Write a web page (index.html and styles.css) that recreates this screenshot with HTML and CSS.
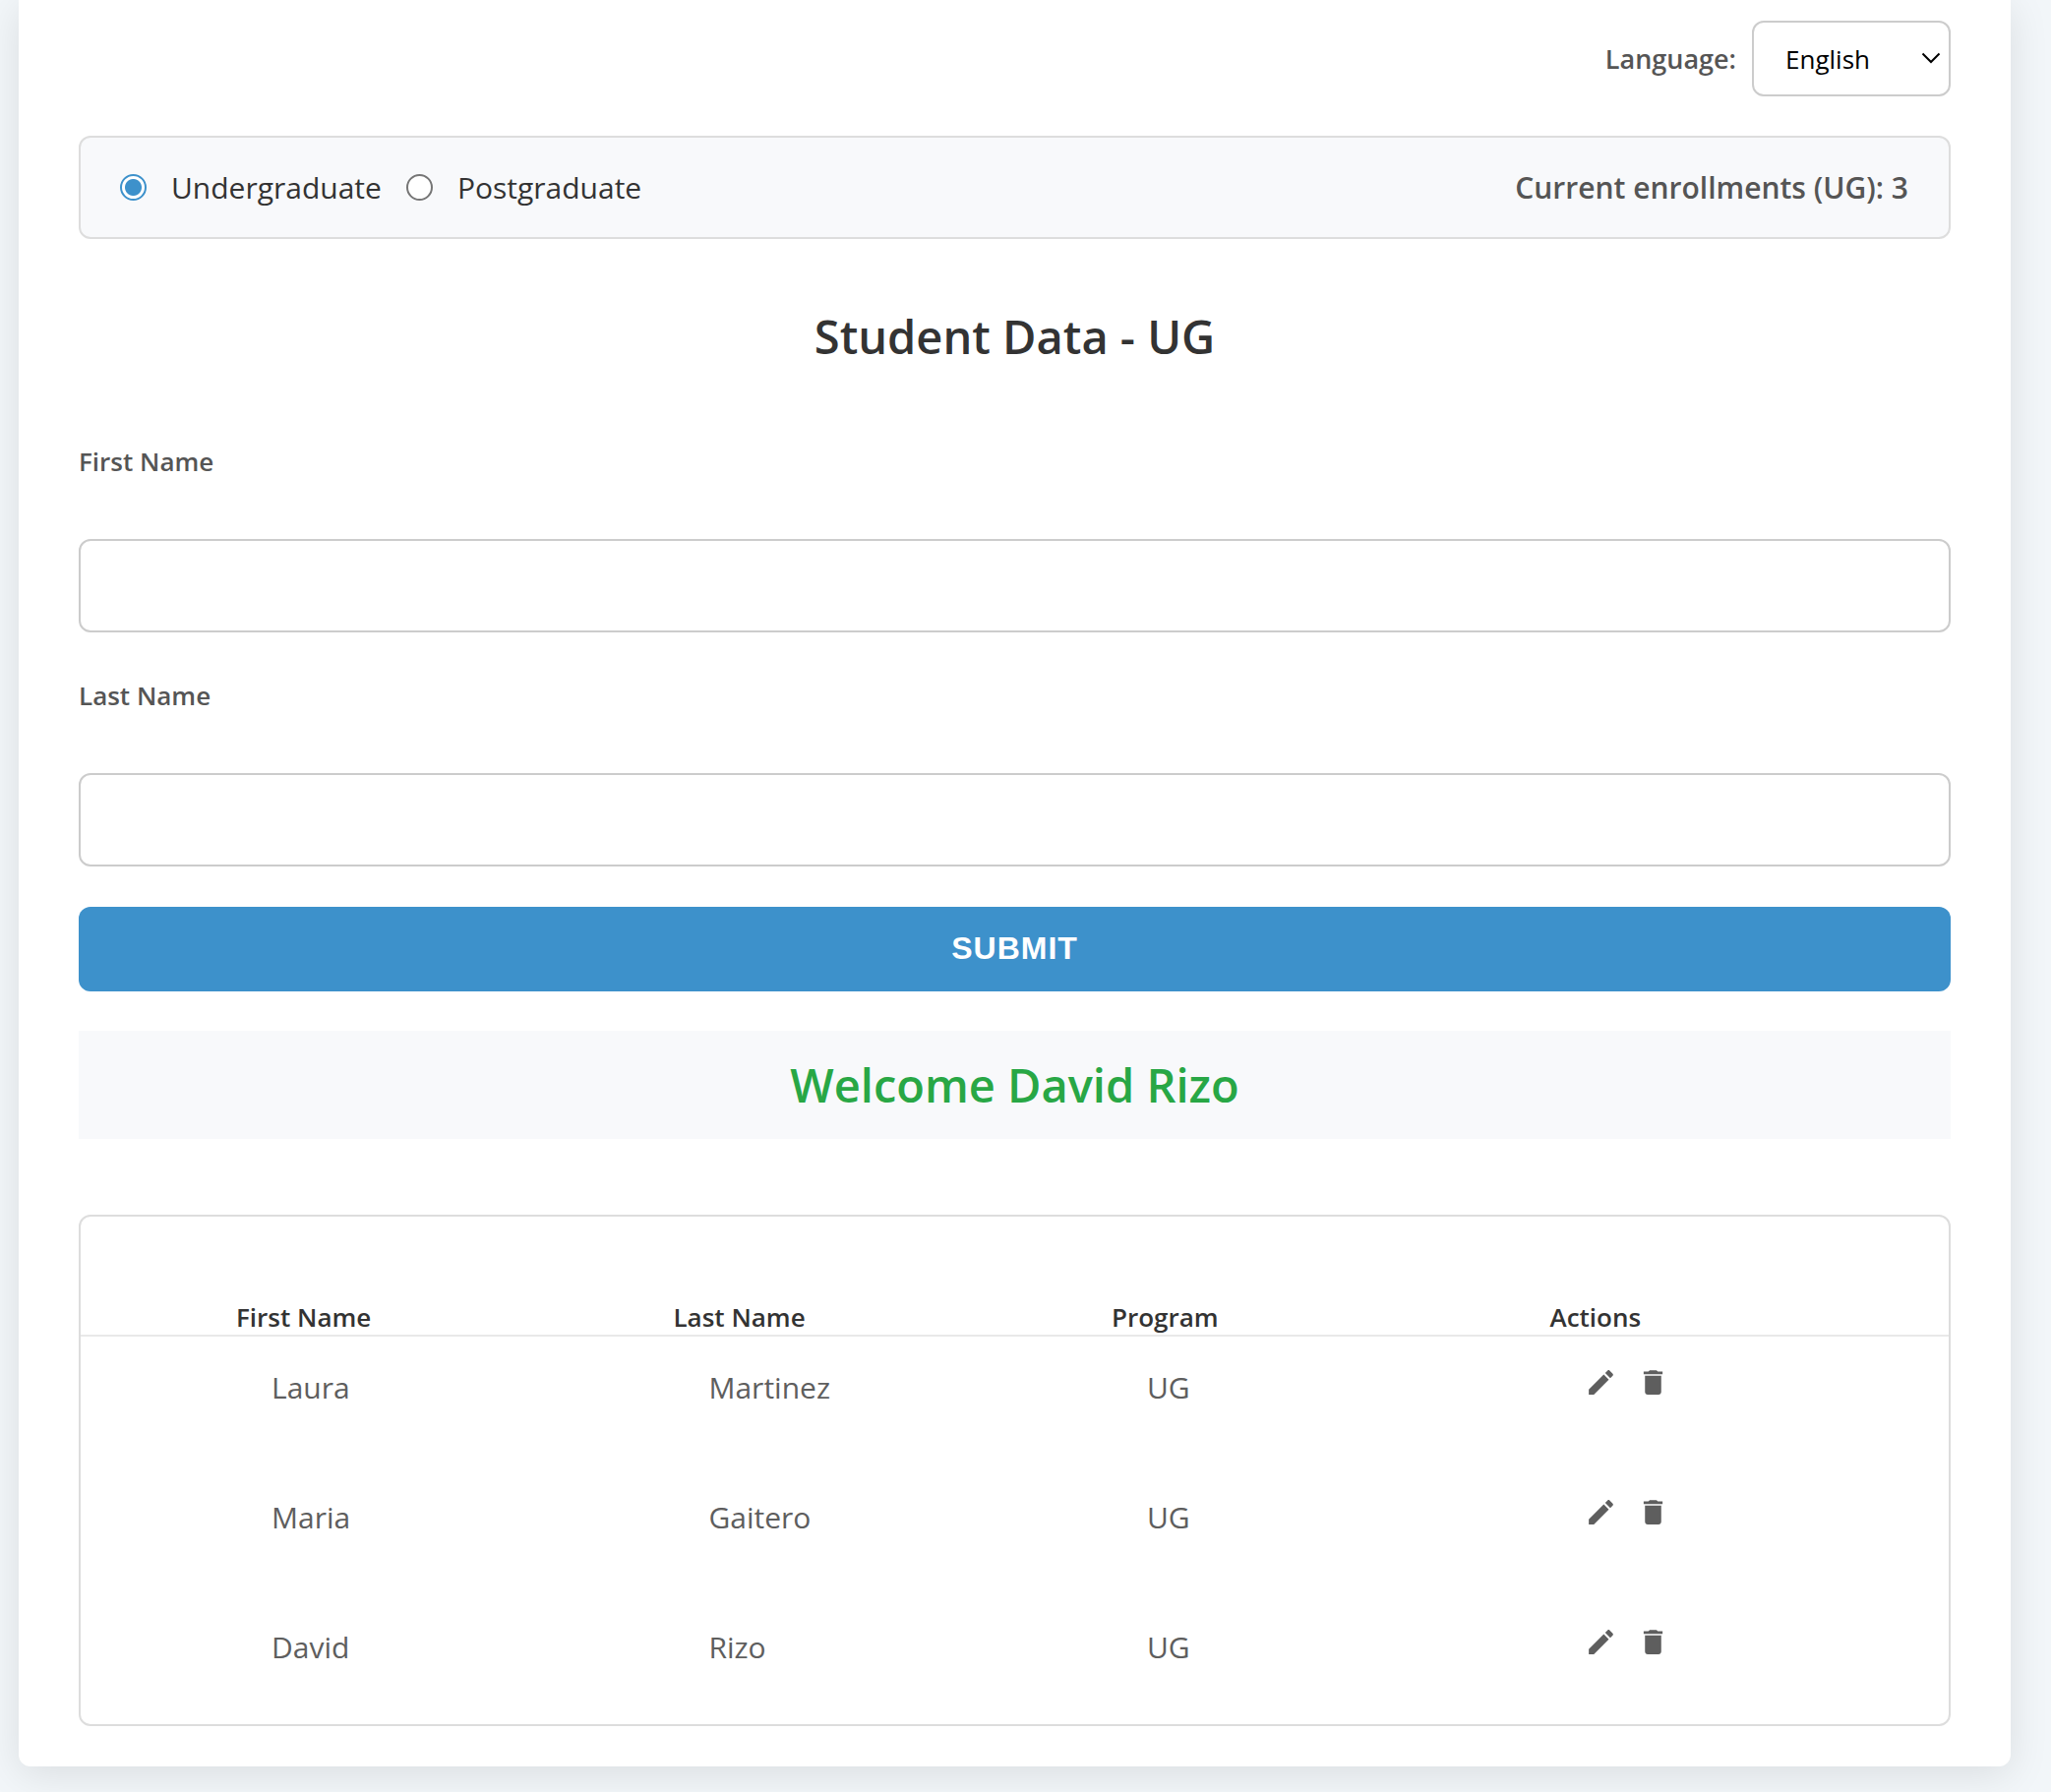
FILE: index.html
```html
<!DOCTYPE html>
<html lang="en">
<head>
<meta charset="utf-8">
<meta name="viewport" content="width=device-width, initial-scale=1">
<title>Student Data</title>
<link rel="stylesheet" href="styles.css">
</head>
<body>
<svg class="sprite" aria-hidden="true">
  <symbol id="icon-edit" viewBox="0 0 24 24"><path d="M3 17.25V21h3.75L17.81 9.94l-3.75-3.75L3 17.25zM20.71 7.04c.39-.39.39-1.02 0-1.41l-2.34-2.34c-.39-.39-1.02-.39-1.41 0l-1.83 1.83 3.75 3.75 1.83-1.83z"/></symbol>
  <symbol id="icon-delete" viewBox="0 0 24 24"><path d="M6 19c0 1.100.9 2 2 2h8c1.100 0 2-.9 2-2V7H6v12zM19 4h-3.500l-1-1h-5l-1 1H5v2h14V4z"/></symbol>
</svg>
<main class="card">
  <div class="language">
    <label class="language-label" for="language">Language:</label>
    <div class="select">
      <select class="select-control" id="language">
        <option>English</option>
        <option>Español</option>
      </select>
      <svg class="select-arrow" viewBox="0 0 20 12" aria-hidden="true"><path d="M1.500 1.500 10 10l8.500-8.500"/></svg>
    </div>
  </div>

  <div class="program-bar">
    <div class="programs">
      <label class="program"><input class="radio" type="radio" name="program" checked>Undergraduate</label>
      <label class="program"><input class="radio" type="radio" name="program">Postgraduate</label>
    </div>
    <div class="count">Current enrollments (UG): 3</div>
  </div>

  <form class="form">
    <h1 class="title">Student Data - UG</h1>
    <div class="field">
      <label class="field-label" for="first-name">First Name</label>
      <input class="field-input" id="first-name" type="text">
    </div>
    <div class="field">
      <label class="field-label" for="last-name">Last Name</label>
      <input class="field-input" id="last-name" type="text">
    </div>
    <button class="submit" type="button">SUBMIT</button>
    <h2 class="welcome">Welcome David Rizo</h2>
  </form>

  <div class="list">
    <table class="table">
      <thead>
        <tr><th>First Name</th><th>Last Name</th><th>Program</th><th>Actions</th></tr>
      </thead>
      <tbody>
        <tr>
          <td>Laura</td><td>Martinez</td><td>UG</td>
          <td><div class="actions">
            <button class="action" type="button" aria-label="Edit"><svg class="icon"><use href="#icon-edit"/></svg></button>
            <button class="action" type="button" aria-label="Delete"><svg class="icon"><use href="#icon-delete"/></svg></button>
          </div></td>
        </tr>
        <tr>
          <td>Maria</td><td>Gaitero</td><td>UG</td>
          <td><div class="actions">
            <button class="action" type="button" aria-label="Edit"><svg class="icon"><use href="#icon-edit"/></svg></button>
            <button class="action" type="button" aria-label="Delete"><svg class="icon"><use href="#icon-delete"/></svg></button>
          </div></td>
        </tr>
        <tr>
          <td>David</td><td>Rizo</td><td>UG</td>
          <td><div class="actions">
            <button class="action" type="button" aria-label="Edit"><svg class="icon"><use href="#icon-edit"/></svg></button>
            <button class="action" type="button" aria-label="Delete"><svg class="icon"><use href="#icon-delete"/></svg></button>
          </div></td>
        </tr>
      </tbody>
    </table>
  </div>
</main>
</body>
</html>
```

FILE: styles.css
```css
* { box-sizing: border-box; }

body {
  margin: 0;
  padding: 0 41px 26px 19px;
  background: #f2f6f9;
  color: #333;
  font-family: "Segoe UI", "Open Sans", "Noto Sans", sans-serif;
  font-size: 30px;
  line-height: 44px;
}

.sprite { display: none; }

.card {
  padding: 21px 61px 41px;
  background: #fff;
  border-radius: 0 0 12px 12px;
  box-shadow: 0 8px 40px rgba(0, 0, 0, 0.1);
}

.language {
  display: flex;
  justify-content: flex-end;
  align-items: center;
  gap: 16px;
  margin-bottom: 40px;
}

.language-label,
.field-label {
  color: #555;
  font-size: 26px;
  font-weight: 600;
}

.language-label { font-size: 27px; }

.select { position: relative; }

.select-control {
  display: block;
  width: 202px;
  height: 77px;
  padding: 0 32px;
  appearance: none;
  background: #fff;
  border: 2px solid #ccc;
  border-radius: 12px;
  color: #000;
  font-family: inherit;
  font-size: 26px;
}

.select-arrow {
  position: absolute;
  top: 32px;
  right: 10px;
  width: 20px;
  height: 12px;
  fill: none;
  stroke: #000;
  stroke-width: 2;
  pointer-events: none;
}

.program-bar {
  display: flex;
  justify-content: space-between;
  align-items: center;
  min-height: 105px;
  padding: 0 41px 0 40px;
  background: #f8f9fb;
  border: 2px solid #ddd;
  border-radius: 12px;
}

.programs,
.program {
  display: flex;
  align-items: center;
  gap: 25px;
}

.radio {
  width: 27px;
  height: 27px;
  margin: 0;
  appearance: none;
  background: #fff;
  border: 2px solid #767676;
  border-radius: 50%;
}

.radio:checked {
  border-color: #3d91cb;
  background: radial-gradient(circle, #3d91cb 8px, #fff 9px);
}

.count {
  color: #555;
  font-weight: 600;
}

.form {
  display: flex;
  flex-direction: column;
}

.title,
.welcome {
  margin: 0;
  font-size: 47px;
  font-weight: 600;
  line-height: 70px;
  text-align: center;
}

.title { margin: 64px 0 69px; }

.field {
  display: flex;
  flex-direction: column;
  gap: 56px;
  margin-bottom: 41px;
}

.field-label { line-height: 46px; }

.field-input {
  width: 100%;
  height: 95px;
  padding: 0 32px;
  border: 2px solid #ccc;
  border-radius: 12px;
  font: inherit;
}

.submit {
  height: 86px;
  margin-bottom: 40px;
  padding: 0 0 2px;
  background: #3d91cb;
  border: 0;
  border-radius: 12px;
  color: #fff;
  font-family: Arial, "Liberation Sans", sans-serif;
  font-size: 32px;
  font-weight: 700;
  letter-spacing: 1px;
}

.welcome {
  padding: 20px;
  background: #f8f9fb;
  color: #28a745;
}

.list {
  margin-top: 77px;
  padding: 84px 0 0;
  border: 2px solid #ddd;
  border-radius: 12px;
}

.table {
  width: 100%;
  table-layout: fixed;
  border-collapse: separate;
  border-spacing: 0;
}

.table th {
  width: 23.46%;
  padding: 0 0 0 40px;
  border-bottom: 2px solid #e9e9e9;
  font-size: 26px;
  font-weight: 600;
  line-height: 36px;
  text-align: left;
}

.table th:first-child {
  width: 29.62%;
  padding-left: 158px;
}

.table td {
  height: 132px;
  padding: 30px 0 0 76px;
  color: #5e5e5e;
  vertical-align: top;
}

.table td:first-child { padding-left: 194px; }

.table tr:last-child td { height: 130px; }

.actions {
  display: flex;
  gap: 20px;
}

.action {
  padding: 0;
  background: none;
  border: 0;
  color: #5e5e5e;
}

.icon {
  display: block;
  width: 33px;
  height: 33px;
  fill: currentColor;
}
```
